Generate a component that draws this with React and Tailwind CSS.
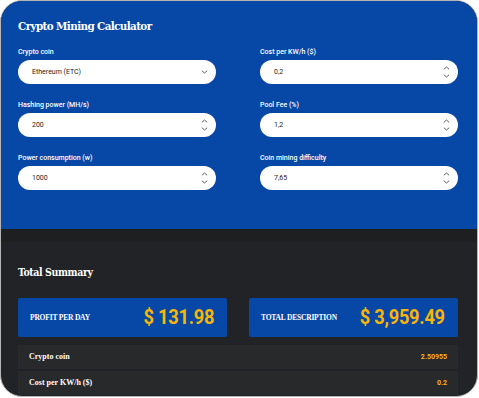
import React from 'react';

const sans = { fontFamily: 'Roboto, "Liberation Sans", sans-serif' };

const ChevronDown = ({ className = '' }) => (
  <svg viewBox="0 0 10 6" className={className} fill="none" stroke="currentColor" strokeWidth="1.3" strokeLinecap="round" strokeLinejoin="round">
    <path d="M1.5 1.5 5 4.5 8.5 1.5" />
  </svg>
);

const ChevronUp = ({ className = '' }) => (
  <svg viewBox="0 0 10 6" className={className} fill="none" stroke="currentColor" strokeWidth="1.3" strokeLinecap="round" strokeLinejoin="round">
    <path d="M1.5 4.5 5 1.5 8.5 4.5" />
  </svg>
);

const Field = ({ label, value, select }) => (
  <div className="flex flex-col">
    <div className="text-[7px] leading-[10px] font-medium text-white" style={sans}>{label}</div>
    <div className="mt-[3px] h-[24px] rounded-full bg-white flex items-center justify-between pl-[14px] pr-[8px]">
      <span className="text-[7px] text-[#222]" style={sans}>{value}</span>
      {select ? (
        <ChevronDown className="w-[7px] h-[4px] text-[#444]" />
      ) : (
        <div className="flex flex-col gap-[4px] text-[#444]">
          <ChevronUp className="w-[7px] h-[4px]" />
          <ChevronDown className="w-[7px] h-[4px]" />
        </div>
      )}
    </div>
  </div>
);

const StatBox = ({ label, value }) => (
  <div className="h-[39px] bg-[#0747a6] rounded-[2px] flex items-center justify-between pl-[12px] pr-[13px]">
    <span className="text-[7.5px] font-bold text-white tracking-tight font-['Liberation_Serif',serif]">{label}</span>
    <span className="inline-block origin-right scale-x-[0.87] text-[21px] font-bold text-[#f8b508] font-['Roboto',sans-serif] tracking-[-0.3px]">{value}</span>
  </div>
);

const Row = ({ label, value }) => (
  <div className="h-[24px] bg-[#28292b] flex items-center justify-between pl-[11px] pr-[11px]">
    <span className="text-[8px] font-bold text-white font-['Liberation_Serif',serif]">{label}</span>
    <span className="text-[7px] font-bold text-[#f8b508]" style={sans}>{value}</span>
  </div>
);

export default function App() {
  return (
    <div className="w-[479px] h-[398px] bg-white">
      <div className="w-[478px] h-[397px] rounded-[22px] border border-[#b5b5b5] overflow-hidden flex flex-col bg-[#222326]">
        <div className="h-[228px] bg-[#0747a6] px-[17px] pt-[17px]">
          <h1 className="text-[11.5px] leading-[16px] font-bold text-white font-['DejaVu_Serif',serif] [font-stretch:condensed] tracking-[-0.6px]">
            Crypto Mining Calculator
          </h1>
          <div className="mt-[13px] grid grid-cols-2 gap-x-[44px] gap-y-[16px] w-[440px]">
            <Field label="Crypto coin" value="Ethereum (ETC)" select />
            <Field label="Cost per KW/h ($)" value="0,2" />
            <Field label="Hashing power (MH/s)" value="200" />
            <Field label="Pool Fee (%)" value="1,2" />
            <Field label="Power consumption (w)" value="1000" />
            <Field label="Coin mining difficulty" value="7,65" />
          </div>
        </div>
        <div className="h-[13px] bg-[#1e1f21]" />
        <div className="px-[17px] pt-[23px]">
          <h2 className="text-[10.5px] leading-[14px] font-bold text-white font-['DejaVu_Serif',serif] [font-stretch:condensed] tracking-[-0.4px]">
            Total Summary
          </h2>
          <div className="mt-[19px] w-[440px] grid grid-cols-2 gap-x-[22px]">
            <StatBox label="PROFIT PER DAY" value="$ 131.98" />
            <StatBox label="TOTAL DESCRIPTION" value="$ 3,959.49" />
          </div>
          <div className="mt-[8px] w-[440px] flex flex-col gap-[2px]">
            <Row label="Crypto coin" value="2.50955" />
            <Row label="Cost per KW/h ($)" value="0.2" />
          </div>
        </div>
      </div>
    </div>
  );
}
